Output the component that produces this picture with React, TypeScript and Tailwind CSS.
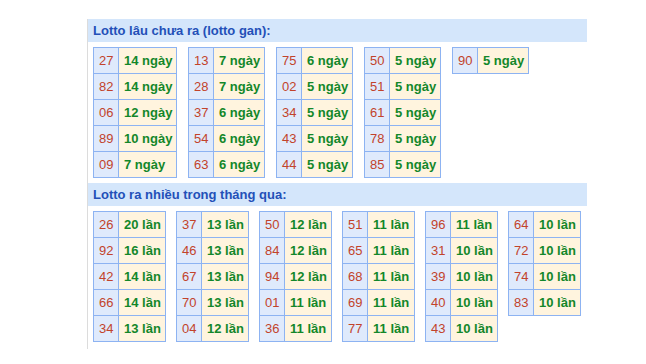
type Row = [string, string];

const ganTables: Row[][] = [
  [["27", "14"], ["82", "14"], ["06", "12"], ["89", "10"], ["09", "7"]],
  [["13", "7"], ["28", "7"], ["37", "6"], ["54", "6"], ["63", "6"]],
  [["75", "6"], ["02", "5"], ["34", "5"], ["43", "5"], ["44", "5"]],
  [["50", "5"], ["51", "5"], ["61", "5"], ["78", "5"], ["85", "5"]],
  [["90", "5"]],
];

const hotTables: Row[][] = [
  [["26", "20"], ["92", "16"], ["42", "14"], ["66", "14"], ["34", "13"]],
  [["37", "13"], ["46", "13"], ["67", "13"], ["70", "13"], ["04", "12"]],
  [["50", "12"], ["84", "12"], ["94", "12"], ["01", "11"], ["36", "11"]],
  [["51", "11"], ["65", "11"], ["68", "11"], ["69", "11"], ["77", "11"]],
  [["96", "11"], ["31", "10"], ["39", "10"], ["40", "10"], ["43", "10"]],
  [["64", "10"], ["72", "10"], ["74", "10"], ["83", "10"]],
];

function NumTable({ rows, unit, valueClass }: { rows: Row[]; unit: string; valueClass: string }) {
  return (
    <div className="border-t border-l border-[#8db3f2] text-[13px] leading-[15px]">
      {rows.map(([num, count]) => (
        <div key={num} className="flex">
          <div className="w-[25px] border-r border-b border-[#8db3f2] bg-[#dfeafc] px-[5px] py-[5px] text-[#c2432b]">
            {num}
          </div>
          <div
            className={`${valueClass} border-r border-b border-[#8db3f2] bg-[#fff4de] px-[5px] py-[5px] font-bold whitespace-nowrap text-[#13872a]`}
          >
            {count} {unit}
          </div>
        </div>
      ))}
    </div>
  );
}

function Section({
  title,
  tables,
  unit,
  widths,
  gap,
}: {
  title: string;
  tables: Row[][];
  unit: string;
  widths: string[];
  gap: string;
}) {
  return (
    <div>
      <div className="h-[23px] bg-[#d4e6fb] pl-[5px] text-[13px] font-bold leading-[23px] text-[#2350b8]">
        {title}
      </div>
      <div className={`flex items-start ${gap} px-[5px] pt-[5px] pb-[5px]`}>
        {tables.map((rows, i) => (
          <NumTable key={i} rows={rows} unit={unit} valueClass={widths[i]} />
        ))}
      </div>
    </div>
  );
}

export default function App() {
  return (
    <div className="h-[364px] w-[646px] bg-white pl-[87px] pt-[19px] font-['Liberation_Sans',Arial,sans-serif]">
      <div className="w-[500px] border-l border-[#dcdcdc] pb-[2px]">
        <Section
          title="Lotto lâu chưa ra (lotto gan):"
          tables={ganTables}
          unit="ngày"
          gap="gap-[11px]"
          widths={["w-[58px]", "w-[51px]", "w-[51px]", "w-[51px]", "w-[51px]"]}
        />
        <Section
          title="Lotto ra nhiều trong tháng qua:"
          tables={hotTables}
          unit="lần"
          gap="gap-[10px]"
          widths={["w-[47px]", "w-[47px]", "w-[47px]", "w-[47px]", "w-[47px]", "w-[47px]"]}
        />
      </div>
    </div>
  );
}
